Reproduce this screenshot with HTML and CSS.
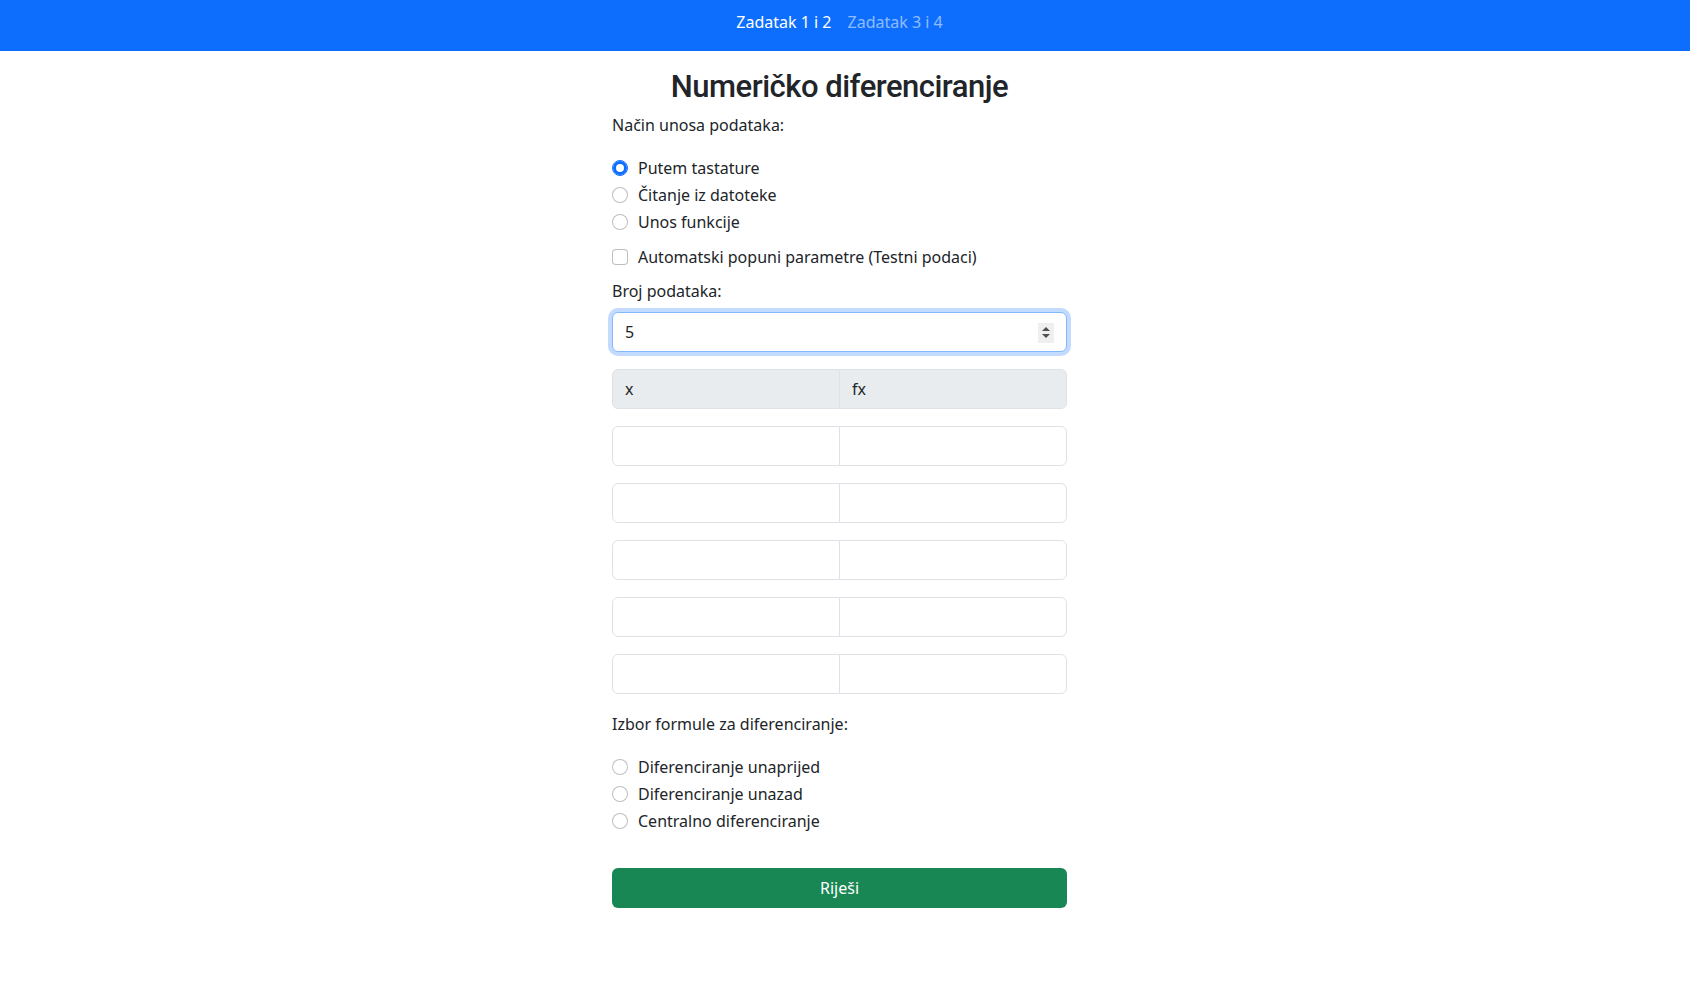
FILE: index.html
```html
<!DOCTYPE html>
<html lang="bs">
<head>
<meta charset="utf-8">
<title>Numeričko diferenciranje</title>
<link rel="stylesheet" href="styles.css">
</head>
<body>
<nav class="topbar">
  <div class="topbar-inner">
    <a class="nav-link active" href="#">Zadatak 1 i 2</a>
    <a class="nav-link" href="#">Zadatak 3 i 4</a>
  </div>
</nav>
<main class="panel">
  <h2 class="title">Numeričko diferenciranje</h2>
  <p class="field-label first">Način unosa podataka:</p>
  <div class="choices first">
    <label class="choice"><input type="radio" name="unos" checked><span>Putem tastature</span></label>
    <label class="choice"><input type="radio" name="unos"><span>Čitanje iz datoteke</span></label>
    <label class="choice"><input type="radio" name="unos"><span>Unos funkcije</span></label>
  </div>
  <label class="choice check-row"><input type="checkbox" class="box"><span>Automatski popuni parametre (Testni podaci)</span></label>
  <p class="field-label">Broj podataka:</p>
  <div class="number-field">
    <input class="num-input" type="number" value="5">
    <span class="spinner"><span class="tri up"></span><span class="tri down"></span></span>
  </div>
  <div class="pair pair-head"><span class="cell">x</span><span class="cell">fx</span></div>
  <div class="pair"><input class="cell" type="text"><input class="cell" type="text"></div>
  <div class="pair"><input class="cell" type="text"><input class="cell" type="text"></div>
  <div class="pair"><input class="cell" type="text"><input class="cell" type="text"></div>
  <div class="pair"><input class="cell" type="text"><input class="cell" type="text"></div>
  <div class="pair"><input class="cell" type="text"><input class="cell" type="text"></div>
  <p class="field-label formula">Izbor formule za diferenciranje:</p>
  <div class="choices second">
    <label class="choice"><input type="radio" name="formula"><span>Diferenciranje unaprijed</span></label>
    <label class="choice"><input type="radio" name="formula"><span>Diferenciranje unazad</span></label>
    <label class="choice"><input type="radio" name="formula"><span>Centralno diferenciranje</span></label>
  </div>
  <button class="solve" type="button">Riješi</button>
</main>
</body>
</html>
```

FILE: styles.css
```css
* { box-sizing: border-box; }

body {
  margin: 0;
  font-family: "Noto Sans", "Open Sans", sans-serif;
  font-size: 16px;
  line-height: 24px;
  color: #212529;
  background: #fff;
}

.topbar {
  height: 51px;
  background: #0d6efd;
}

.topbar-inner {
  width: 455px;
  margin-left: calc(50% - 233px);
  display: flex;
  justify-content: center;
  padding-top: 10px;
}

.nav-link {
  color: rgba(255, 255, 255, 0.55);
  text-decoration: none;
  padding: 0 8px;
  line-height: 24px;
}

.nav-link.active { color: #fff; }

.panel {
  width: 455px;
  margin-left: calc(50% - 233px);
  display: flex;
  flex-direction: column;
}

.title {
  margin: 17px 0 0;
  font-family: Roboto, "Noto Sans", sans-serif;
  font-size: 31px;
  letter-spacing: -0.5px;
  line-height: 38px;
  font-weight: 500;
  text-align: center;
}

.field-label {
  margin: 10px 0 0;
  line-height: 24px;
}

.field-label.first { margin-top: 7px; }

.field-label.formula { margin-top: 18.5px; }

.choices {
  margin-top: 18px;
  display: flex;
  flex-direction: column;
}

.choices.first { margin-top: 19px; }

.choices.second { margin-top: 19px; }

.choice {
  display: flex;
  align-items: flex-start;
  height: 24px;
  margin-bottom: 3px;
  line-height: 24px;
}

.choice input {
  appearance: none;
  -webkit-appearance: none;
  width: 16px;
  height: 16px;
  margin: 4px 10px 0 0;
  border: 1px solid rgba(0, 0, 0, 0.25);
  border-radius: 50%;
  background: #fff;
  flex: none;
}

.choice input:checked {
  background: #fff;
  border-color: #0d6efd;
  box-shadow: inset 0 0 0 3px #0d6efd;
}

.choice input.box { border-radius: 4px; }

.check-row { margin-top: 8px; margin-bottom: 0; }

.number-field {
  position: relative;
  margin-top: 9px;
}

.num-input {
  display: block;
  width: 100%;
  height: 39.5px;
  padding: 6px 12px;
  font: inherit;
  color: #212529;
  border: 1px solid #86b7fe;
  border-radius: 6px;
  box-shadow: 0 0 0 4px rgba(13, 110, 253, 0.25);
  outline: none;
  -moz-appearance: textfield;
}

.num-input::-webkit-inner-spin-button,
.num-input::-webkit-outer-spin-button {
  -webkit-appearance: none;
  margin: 0;
}

.spinner {
  position: absolute;
  right: 13px;
  top: 10.5px;
  width: 16px;
  height: 20px;
  background: #efefef;
  display: flex;
  flex-direction: column;
  align-items: center;
  justify-content: center;
  gap: 3px;
}

.tri {
  width: 0;
  height: 0;
  border-left: 4px solid transparent;
  border-right: 4px solid transparent;
}

.tri.up { border-bottom: 4px solid #505050; }
.tri.down { border-top: 4px solid #505050; }

.pair {
  display: flex;
  margin-top: 17.5px;
  height: 39.5px;
}

.pair .cell {
  flex: 1 1 0;
  min-width: 0;
  height: 39.5px;
  padding: 6px 12px;
  font: inherit;
  color: #212529;
  background: #fff;
  border: 1px solid #dee2e6;
  outline: none;
}

.pair .cell:first-child {
  border-radius: 6px 0 0 6px;
}

.pair .cell:last-child {
  margin-left: -1px;
  border-radius: 0 6px 6px 0;
}

.pair-head .cell {
  background: #e9ecef;
  line-height: 26px;
}

.solve {
  margin-top: 32px;
  height: 40px;
  width: 100%;
  border: 0;
  border-radius: 6px;
  background: #198754;
  color: #fff;
  font: inherit;
  cursor: pointer;
}
```
